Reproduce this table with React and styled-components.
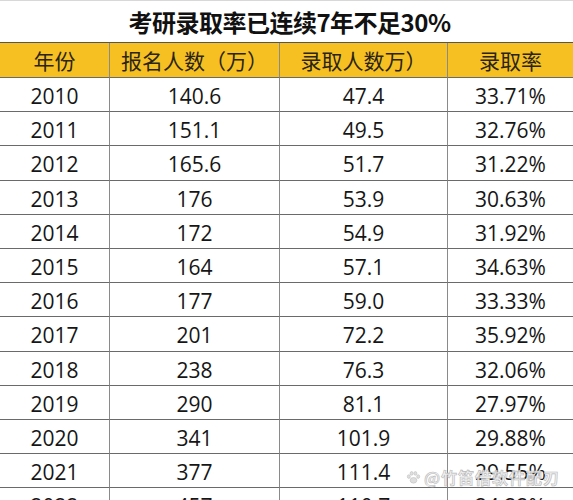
import React from 'react';
import styled, { createGlobalStyle } from 'styled-components';

const rows = [
  ['2010', '140.6', '47.4', '33.71%'],
  ['2011', '151.1', '49.5', '32.76%'],
  ['2012', '165.6', '51.7', '31.22%'],
  ['2013', '176', '53.9', '30.63%'],
  ['2014', '172', '54.9', '31.92%'],
  ['2015', '164', '57.1', '34.63%'],
  ['2016', '177', '59.0', '33.33%'],
  ['2017', '201', '72.2', '35.92%'],
  ['2018', '238', '76.3', '32.06%'],
  ['2019', '290', '81.1', '27.97%'],
  ['2020', '341', '101.9', '29.88%'],
  ['2021', '377', '111.4', '29.55%'],
  ['2022', '457', '110.7', '24.22%'],
];

const headers = ['年份', '报名人数（万）', '录取人数万）', '录取率'];

const App = () => {
  return (
    <>
      <GlobalStyle />
      <Page>
        <Title>考研录取率已连续7年不足30%</Title>
        <Grid>
          {headers.map((h) => (
            <HeadCell key={h}>{h}</HeadCell>
          ))}
          {rows.map((r) =>
            r.map((v, i) => <Cell key={r[0] + i}>{v}</Cell>)
          )}
        </Grid>
        <Watermark>
          <svg width="15" height="15" viewBox="0 0 16 16">
            <g fill="#dedede" stroke="#bdbdbd" strokeWidth="0.6">
              <ellipse cx="8" cy="11" rx="3.6" ry="3" />
              <ellipse cx="3" cy="7" rx="1.6" ry="2" />
              <ellipse cx="6" cy="3.6" rx="1.6" ry="2" />
              <ellipse cx="10" cy="3.6" rx="1.6" ry="2" />
              <ellipse cx="13" cy="7" rx="1.6" ry="2" />
            </g>
          </svg>
          <span>@竹笛借软件配刃</span>
        </Watermark>
      </Page>
    </>
  );
};

const GlobalStyle = createGlobalStyle`
  html, body {
    margin: 0;
    padding: 0;
    overflow: hidden;
    background: #fff;
  }
`;

const Page = styled.div`
  position: relative;
  width: 573px;
  height: 500px;
  overflow: hidden;
  font-family: "Open Sans", "Noto Sans CJK SC", sans-serif;
  color: #161616;
`;

const Title = styled.div`
  height: 43px;
  display: flex;
  align-items: center;
  justify-content: center;
  padding-left: 6px;
  box-sizing: border-box;
  border-top: 1px solid #d8d8d8;
  border-bottom: 1px solid #555;
  font-family: "Noto Sans CJK SC", sans-serif;
  font-weight: 700;
  font-size: 24px;
  letter-spacing: -0.5px;
  color: #111;
`;

const Grid = styled.div`
  display: grid;
  grid-template-columns: 110px 170px 168px 125px;
  grid-template-rows: 35px;
  grid-auto-rows: 34.2px;
`;

const Cell = styled.div`
  display: flex;
  align-items: center;
  justify-content: center;
  padding-top: 3px;
  box-sizing: border-box;
  border-right: 1px solid #8a8a8a;
  border-bottom: 1px solid #6a6a6a;
  font-size: 21px;
  white-space: nowrap;

  &:nth-child(4n) {
    border-right: none;
  }
`;

const HeadCell = styled(Cell)`
  background: #f6c023;
  padding-top: 0;
  font-family: "Noto Sans CJK SC", sans-serif;
  font-size: 21px;
  color: #2a2414;
`;

const Watermark = styled.div`
  position: absolute;
  left: 406px;
  top: 465px;
  display: flex;
  align-items: center;
  gap: 3px;
  font-family: "Noto Sans CJK SC", sans-serif;
  font-size: 16px;
  font-weight: 700;
  color: rgba(240, 240, 240, 0.9);
  -webkit-text-stroke: 0.6px #b8b8b8;
  letter-spacing: 1px;
`;

export default App;
